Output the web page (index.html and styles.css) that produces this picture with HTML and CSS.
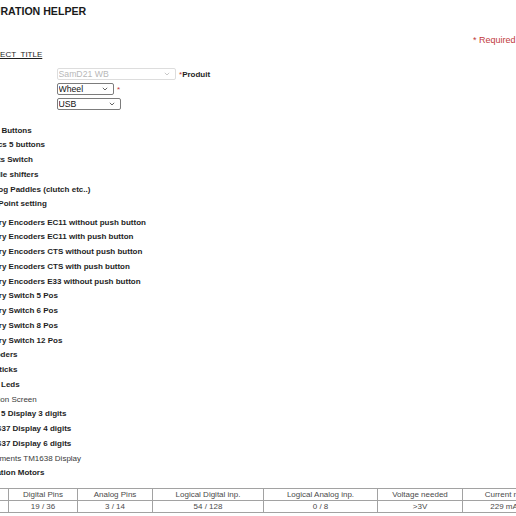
FILE: index.html
```html
<!DOCTYPE html>
<html lang="en">
<head>
<meta charset="utf-8">
<title>Configuration Helper</title>
<link rel="stylesheet" href="styles.css">
</head>
<body>
<div class="page">
  <h1 class="title">CONFIGURATION HELPER</h1>

  <div class="required-row"><span class="req">* Required</span></div>

  <div class="project"><a class="project-link" href="#">PROJECT_TITLE</a></div>

  <div class="form">
    <div class="field">
      <select class="sel sel-product" disabled>
        <option>SamD21 WB</option>
      </select>
      <span class="req">*</span><span class="field-label">Produit</span>
    </div>
    <div class="field">
      <select class="sel sel-type">
        <option>Wheel</option>
        <option>Button box</option>
      </select>
      <span class="req">*</span>
    </div>
    <div class="field">
      <select class="sel sel-link">
        <option>USB</option>
        <option>Bluetooth</option>
      </select>
    </div>
  </div>

  <ul class="options options-first">
    <li class="opt">Main Buttons</li>
    <li class="opt">Basics 5 buttons</li>
    <li class="opt">Lights Switch</li>
    <li class="opt">Paddle shifters</li>
    <li class="opt">Analog Paddles (clutch etc..)</li>
    <li class="opt">Bite Point setting</li>
  </ul>

  <ul class="options options-second">
    <li class="opt">Rotary Encoders EC11 without push button</li>
    <li class="opt">Rotary Encoders EC11 with push button</li>
    <li class="opt">Rotary Encoders CTS without push button</li>
    <li class="opt">Rotary Encoders CTS with push button</li>
    <li class="opt">Rotary Encoders E33 without push button</li>
    <li class="opt">Rotary Switch 5 Pos</li>
    <li class="opt">Rotary Switch 6 Pos</li>
    <li class="opt">Rotary Switch 8 Pos</li>
    <li class="opt">Rotary Switch 12 Pos</li>
    <li class="opt">Encoders</li>
    <li class="opt">Joysticks</li>
    <li class="opt">RGB Leds</li>
    <li class="opt opt-light">Function Screen</li>
    <li class="opt">Shift 5 Display 3 digits</li>
    <li class="opt">TM1637 Display 4 digits</li>
    <li class="opt">TM1637 Display 6 digits</li>
    <li class="opt opt-light">7 Segments TM1638 Display</li>
    <li class="opt">Vibration Motors</li>
  </ul>

  <table class="summary">
    <colgroup>
      <col class="c-name">
      <col class="c-dpin">
      <col class="c-apin">
      <col class="c-ldig">
      <col class="c-lana">
      <col class="c-volt">
      <col class="c-curr">
    </colgroup>
    <tr>
      <td>Used</td>
      <td>Digital Pins</td>
      <td>Analog Pins</td>
      <td>Logical Digital inp.</td>
      <td>Logical Analog inp.</td>
      <td>Voltage needed</td>
      <td>Current needed</td>
    </tr>
    <tr>
      <td>Total</td>
      <td>19 / 36</td>
      <td>3 / 14</td>
      <td>54 / 128</td>
      <td>0 / 8</td>
      <td>&gt;3V</td>
      <td>229 mA max</td>
    </tr>
  </table>
</div>
</body>
</html>
```

FILE: styles.css
```css
html, body {
  margin: 0;
  padding: 0;
  background: #ffffff;
  overflow: hidden;
}

body {
  font-family: "Liberation Sans", Arial, sans-serif;
  font-size: 8px;
  color: #1e1e1e;
}

/* the page is scrolled a little to the right, so its left edge is off screen */
.page {
  margin-left: -19px;
  width: 640px;
}

.title {
  margin: 5px 0 0 -29.4px;
  font-size: 10.6px;
  line-height: 13px;
  font-weight: bold;
  color: #1a1a1a;
}

.required-row {
  width: 534.5px;
  margin-top: 17px;
  text-align: right;
  font-size: 9px;
  line-height: 10px;
}

.req {
  color: #bf3a3c;
}

.project {
  margin: 5px 0 0 -2.3px;
  line-height: 10px;
}

.project-link {
  color: #1e1e1e;
  text-decoration: underline;
}

.form {
  margin: 8px 0 0 75.5px;
  display: flex;
  flex-direction: column;
  gap: 3px;
}

.field {
  display: flex;
  align-items: center;
  height: 12px;
}

.sel {
  -webkit-appearance: none;
  appearance: none;
  box-sizing: border-box;
  height: 12px;
  margin: 0;
  padding: 0 0 0 1px;
  font-family: "Liberation Sans", Arial, sans-serif;
  font-size: 8.7px;
  line-height: 10px;
  color: #111;
  border: 1px solid #7c7c7c;
  border-radius: 2px;
  background-color: #fff;
  background-image: url("data:image/svg+xml;utf8,<svg xmlns='http://www.w3.org/2000/svg' width='6' height='4' viewBox='0 0 6 4'><path d='M0.8 0.8 L3 3 L5.2 0.8' fill='none' stroke='%23555' stroke-width='0.9'/></svg>");
  background-repeat: no-repeat;
  background-position: right 5px center;
  background-size: 6px 4px;
}

.sel:disabled {
  color: #9a9a9a;
  border-color: #cfcfcf;
  background-image: url("data:image/svg+xml;utf8,<svg xmlns='http://www.w3.org/2000/svg' width='6' height='4' viewBox='0 0 6 4'><path d='M0.8 0.8 L3 3 L5.2 0.8' fill='none' stroke='%23aaa' stroke-width='0.9'/></svg>");
}

.sel-product { width: 119.5px; }
.sel-type { width: 57.5px; }
.sel-link { width: 64.5px; }

.field .req {
  margin-left: 3px;
}

.field-label {
  font-weight: bold;
  color: #1e1e1e;
}

.options {
  list-style: none;
  margin: 0;
  padding: 0;
}

.options-first {
  margin-top: 13.6px;
}

.options-second {
  margin-top: 3.6px;
}

.opt {
  height: 14.75px;
  line-height: 14.75px;
  font-weight: bold;
  white-space: nowrap;
}

.opt-light {
  margin-left: -2.5px;
  font-weight: normal;
  color: #3a3a3a;
}

.summary {
  margin: 7px 0 0 -41px;
  border-collapse: collapse;
  table-layout: fixed;
  width: 622px;
  color: #4a4a4a;
}

.summary td {
  border: 1px solid #a2a2a2;
  height: 11px;
  padding: 0;
  line-height: 10px;
  text-align: center;
  white-space: nowrap;
}

.c-name { width: 68px; }
.c-dpin { width: 69px; }
.c-apin { width: 75px; }
.c-ldig { width: 111px; }
.c-lana { width: 114px; }
.c-volt { width: 85px; }
.c-curr { width: 100px; }
```
